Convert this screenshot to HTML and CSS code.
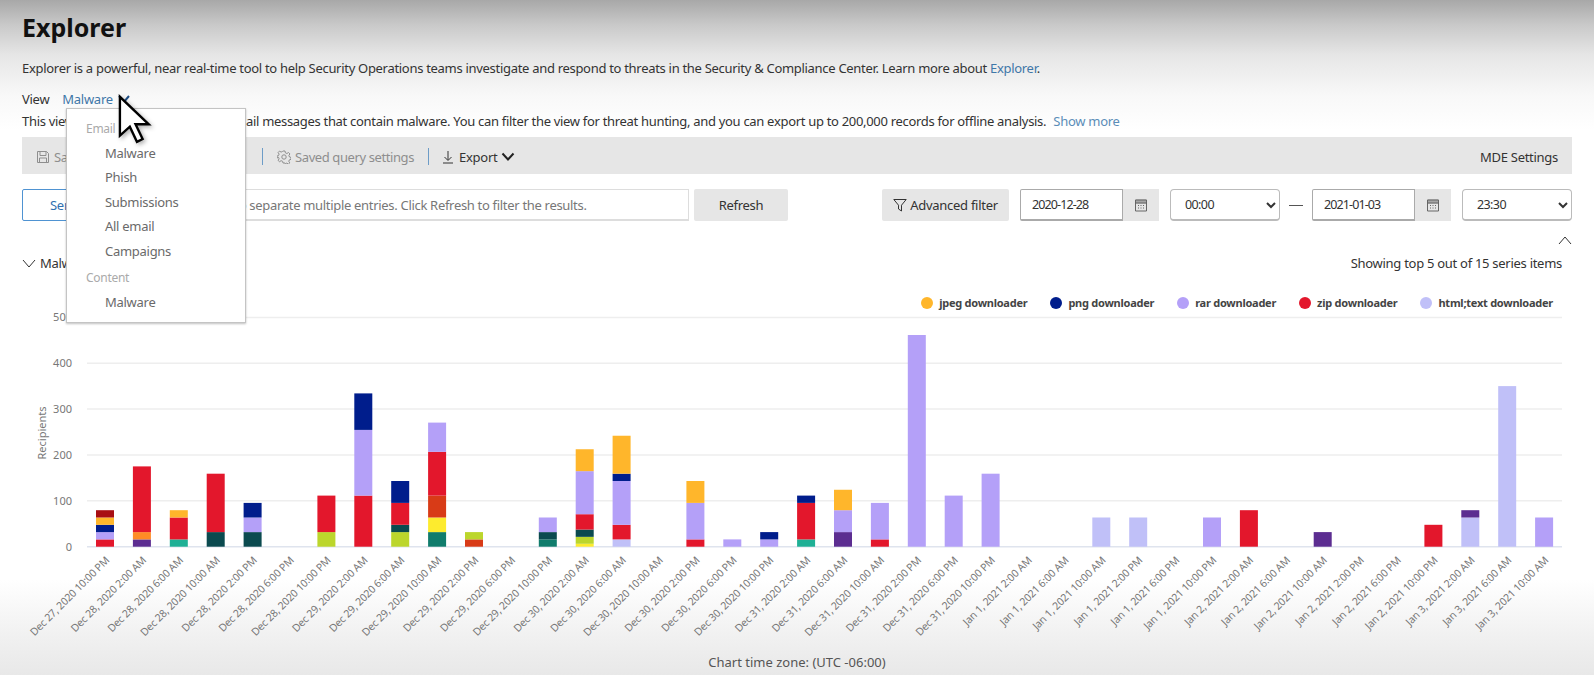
FILE: index.html
```html
<!DOCTYPE html>
<html lang="en">
<head>
    <meta charset="UTF-8">
    <meta name="viewport" content="width=device-width, initial-scale=1.0">
    <title>Explorer</title>
    <link rel="stylesheet" href="styles.css">
</head>
<body>
    <header class="intro">
        <h1>Explorer</h1>
        <p class="intro-text">Explorer is a powerful, near real-time tool to help Security Operations teams investigate and respond to threats in the Security &amp; Compliance Center. Learn more about <a href="#">Explorer</a>.</p>
        <div class="view-row">
            <span>View</span>
            <a href="#" class="view-link">Malware</a>
            <svg class="icon view-chevron" viewBox="0 0 14 14"><path d="M2 4l5 6 5-6" /></svg>
        </div>
        <p class="view-text">This view shows information about email messages that contain malware. You can filter the view for threat hunting, and you can export up to 200,000 records for offline analysis. <a href="#" class="show-more">Show more</a></p>
    </header>

    <div class="toolbar">
        <span class="tool tool-muted save-tool">
            <svg class="icon" viewBox="0 0 14 14"><path d="M1.5 1.5h9l2 2v9h-11zM4 1.5v4h6v-4M3.5 12.5v-4.5h7v4.5" /></svg>
            Save query
        </span>
        <span class="tool-sep"></span>
        <span class="tool tool-muted settings-tool">
            <svg class="icon" viewBox="0 0 14 14"><circle cx="7" cy="7" r="2.2" /><path d="M6 1h2l.4 1.8 1.5.7 1.6-1 1.4 1.4-1 1.6.6 1.5 1.5.4v2l-1.6.4-.6 1.5 1 1.6-1.4 1.2-1.6-1-1.5.6L8 13H6l-.4-1.7-1.5-.6-1.6 1-1.4-1.3 1-1.6-.6-1.5L0 8V6l1.5-.4.6-1.5-1-1.6 1.4-1.4 1.6 1 1.5-.7z" /></svg>
            Saved query settings
        </span>
        <span class="tool-sep"></span>
        <span class="tool export-tool">
            <svg class="icon" viewBox="0 0 14 14"><path d="M7 1v9M3.5 7L7 10.500 10.500 7M2 13h10" /></svg>
            Export
            <svg class="icon export-chevron" viewBox="0 0 14 14"><path d="M1.500 3.500L7 9.500l5.500-6" /></svg>
        </span>
        <span class="tool mde-tool">MDE Settings</span>
    </div>

    <div class="filters">
        <button type="button" class="sender-btn">Sender</button>
        <input type="text" class="search-input" placeholder="Use commas to separate multiple entries. Click Refresh to filter the results.">
        <button type="button" class="grey-btn refresh-btn">Refresh</button>
        <button type="button" class="grey-btn advanced-btn">
            <svg class="icon" viewBox="0 0 14 14"><path d="M.8 1.500h12.400L8.500 7.200v5.800l-3-2V7.200z" /></svg>
            Advanced filter
        </button>
        <div class="date-field">
            <input type="text" value="2020-12-28">
            <span class="cal-btn">
                <svg class="icon" viewBox="0 0 14 14"><path d="M1.500 2h11v11h-11zM1.500 5h11M4 7.500h1M6.500 7.500h1M9 7.500h1M4 10h1M6.500 10h1M9 10h1" /><path class="cal-head" d="M1.500 2h11v3h-11z" /></svg>
            </span>
        </div>
        <select class="time-select"><option>00:00</option></select>
        <span class="date-dash"></span>
        <div class="date-field">
            <input type="text" value="2021-01-03">
            <span class="cal-btn">
                <svg class="icon" viewBox="0 0 14 14"><path d="M1.500 2h11v11h-11zM1.500 5h11M4 7.500h1M6.500 7.500h1M9 7.500h1M4 10h1M6.500 10h1M9 10h1" /><path class="cal-head" d="M1.500 2h11v3h-11z" /></svg>
            </span>
        </div>
        <select class="time-select"><option>23:30</option></select>
    </div>

    <div class="collapse-row">
        <svg class="icon" viewBox="0 0 14 14"><path d="M1 10l6-7 6 7" /></svg>
    </div>
    <div class="chart-head">
        <span class="chart-title">
            <svg class="icon" viewBox="0 0 14 14"><path d="M1 4l6 7 6-7" /></svg>
            Malware family
        </span>
        <span>Showing top 5 out of 15 series items</span>
    </div>
    <div class="legend">
        <span class="legend-item"><i class="dot dot-amber"></i>jpeg downloader</span>
        <span class="legend-item"><i class="dot dot-navy"></i>png downloader</span>
        <span class="legend-item"><i class="dot dot-lilac"></i>rar downloader</span>
        <span class="legend-item"><i class="dot dot-red"></i>zip downloader</span>
        <span class="legend-item"><i class="dot dot-pale"></i>html;text downloader</span>
    </div>

    <svg id="chart" class="chart" viewBox="0 311 1594 340"></svg>
    <div class="time-zone">Chart time zone: (UTC -06:00)</div>

    <!-- view dropdown, open -->
    <div class="view-menu">
        <div class="menu-label">Email</div>
        <div class="menu-item">Malware</div>
        <div class="menu-item">Phish</div>
        <div class="menu-item">Submissions</div>
        <div class="menu-item">All email</div>
        <div class="menu-item">Campaigns</div>
        <div class="menu-label menu-label-gap">Content</div>
        <div class="menu-item">Malware</div>
    </div>

    <svg class="cursor" viewBox="0 0 40 56"><path d="M3 3v41l10.500-9.500 7.500 16 6-3-7.500-15.500h14z" /></svg>

    <script src="chart.js"></script>
</body>
</html>
```

FILE: styles.css
```css
html, body {
    margin: 0;
    height: 675px;
    overflow: hidden;
}
body {
    position: relative;
    font-family: "Noto Sans", sans-serif;
    font-size: 13px;
    letter-spacing: -0.28px;
    color: #333;
    background-color: #fff;
    background-image:
        linear-gradient(180deg, #a8a8a8 0, #c9c9c9 25px, #e6e6e6 55px, #f8f8f8 95px, #fff 130px),
        linear-gradient(0deg, #e8e8e8 0, #f1f1f1 40px, #fff 95px);
    background-repeat: no-repeat;
    background-size: 100% 130px, 100% 95px;
    background-position: top, bottom;
}
a {
    color: #3f77a8;
    text-decoration: none;
}
button, input, select {
    font: inherit;
    letter-spacing: inherit;
}
.icon {
    width: 14px;
    height: 14px;
    fill: none;
    stroke: currentColor;
    stroke-width: 1;
    flex: none;
}

/* heading block */
.intro {
    padding: 10px 22px 0;
}
h1 {
    margin: 0;
    font-size: 25px;
    line-height: 34px;
    font-weight: 700;
    letter-spacing: 0;
    color: #111;
}
.intro-text {
    margin: 14px 0 0;
    line-height: 20px;
    letter-spacing: -0.3px;
}
.view-row {
    display: flex;
    align-items: center;
    margin-top: 11px;
    height: 20px;
}
.view-link {
    margin-left: 13px;
}
.view-chevron {
    margin-left: 4px;
    color: #1f4f86;
    stroke-width: 2;
}
.view-text {
    margin: 2px 0 0;
    line-height: 20px;
    letter-spacing: -0.31px;
}
.show-more {
    margin-left: 4px;
    color: #5b8db8;
    letter-spacing: -0.28px;
}

/* toolbar */
.toolbar {
    box-sizing: border-box;
    display: flex;
    align-items: center;
    margin: 6px 22px 0;
    height: 37px;
    padding: 2px 14px 0;
    background: #e6e6e6;
}
.tool {
    display: flex;
    align-items: center;
    gap: 4px;
}
.tool-muted {
    color: #8e8e8e;
}
.save-tool {
    width: 212px;
}
.settings-tool {
    letter-spacing: -0.4px;
}
.tool-sep {
    width: 1px;
    height: 17px;
    margin: 0 14px;
    background: #6d9cc7;
}
.export-tool {
    margin-left: -2px;
}
.export-chevron {
    stroke-width: 2;
    color: #222;
}
.mde-tool {
    margin-left: auto;
}

/* filter row */
.filters {
    display: flex;
    align-items: center;
    margin: 15px 22px 0;
    height: 32px;
}
.sender-btn {
    width: 115px;
    height: 32px;
    color: #2f6fb0;
    text-align: left;
    padding-left: 27px;
    background: #fff;
    border: 1px solid #4f93d2;
    border-radius: 2px 0 0 2px;
}
.search-input {
    box-sizing: border-box;
    width: 552px;
    height: 32px;
    padding: 1px 0 0 18px;
    letter-spacing: -0.31px;
    border: 1px solid #ddd;
    border-bottom-width: 2px;
}
.search-input::placeholder {
    color: #777;
}
.grey-btn {
    display: flex;
    align-items: center;
    justify-content: center;
    height: 32px;
    color: #333;
    background: #e6e6e6;
    border: none;
    border-radius: 2px;
}
.refresh-btn {
    width: 94px;
    margin-left: 5px;
}
.advanced-btn {
    width: 127px;
    margin-left: 94px;
    gap: 3px;
}
.date-field {
    display: flex;
    height: 32px;
    width: 139px;
    margin-left: 11px;
}
.date-field + .time-select {
    margin-left: 11px;
}
.date-field input {
    box-sizing: border-box;
    width: 103px;
    height: 32px;
    padding: 0 0 0 11px;
    font-size: 12.500px;
    letter-spacing: -0.9px;
    color: #333;
    border: 1px solid #aaa;
    border-bottom-width: 2px;
    border-radius: 2px 0 0 2px;
}
.cal-btn {
    display: flex;
    align-items: center;
    justify-content: center;
    flex: 1;
    color: #666;
    background: #e6e6e6;
}
.cal-head {
    fill: currentColor;
    opacity: .5;
}
.time-select {
    box-sizing: border-box;
    width: 110px;
    height: 32px;
    padding-left: 10px;
    font-size: 12.500px;
    letter-spacing: -0.6px;
    color: #333;
    background: #fff;
    border: 1px solid #bbb;
    border-bottom-width: 2px;
    border-radius: 4px;
}
.date-dash {
    width: 14px;
    height: 1px;
    margin: 0 -2px 0 9px;
    background: #555;
}

/* chart header */
.collapse-row {
    display: flex;
    justify-content: flex-end;
    margin-top: 13px;
    height: 14px;
    padding-right: 22px;
    color: #333;
}
.chart-head {
    display: flex;
    justify-content: space-between;
    align-items: center;
    margin-top: 5px;
    height: 20px;
    padding: 0 32px 0 22px;
}
.chart-title {
    display: flex;
    align-items: center;
    gap: 4px;
}
.legend {
    display: flex;
    justify-content: flex-end;
    gap: 23px;
    margin-top: 21px;
    height: 17px;
    padding-right: 41px;
    font-size: 11px;
    letter-spacing: -0.25px;
    font-weight: 700;
    color: #444;
}
.legend-item {
    display: flex;
    align-items: center;
    gap: 6px;
}
.dot {
    width: 12px;
    height: 12px;
    border-radius: 50%;
}
.dot-amber { background: #ffb62b; }
.dot-navy { background: #001d8c; }
.dot-lilac { background: #b4a0f8; }
.dot-red { background: #e3172c; }
.dot-pale { background: #c0c0f8; }

/* chart */
.chart {
    display: block;
    width: 1594px;
    height: 340px;
    overflow: visible;
    font-family: "Noto Sans", sans-serif;
}
.grid-line {
    stroke: #eee;
    stroke-width: 1.500;
}
.base-line {
    stroke: #dfe4ee;
    stroke-width: 1.500;
}
.axis-text {
    font-size: 11px;
    letter-spacing: 0;
    fill: #777;
}
.time-label {
    font-size: 10.500px;
    letter-spacing: -0.2px;
    fill: #777;
}
.time-zone {
    margin-top: 1px;
    line-height: 20px;
    text-align: center;
    letter-spacing: 0;
    color: #555;
}

/* things lying on top */
.view-menu {
    position: absolute;
    left: 66px;
    top: 108px;
    box-sizing: border-box;
    width: 180px;
    height: 215px;
    padding: 8px 0 0 19px;
    background: #fff;
    border: 1px solid #c4c4c4;
    box-shadow: 0 1px 2px rgba(0, 0, 0, .25);
}
.menu-label {
    height: 24px;
    line-height: 24px;
    font-size: 12px;
    color: #aaa;
}
.menu-label-gap {
    margin-top: 3px;
}
.menu-item {
    height: 24.400px;
    line-height: 24.400px;
    margin-left: 19px;
    color: #6a6a6a;
}
.cursor {
    position: absolute;
    left: 117px;
    top: 94px;
    width: 38px;
    height: 53px;
    fill: #fff;
    stroke: #000;
    stroke-width: 2.500;
    stroke-linejoin: miter;
    filter: drop-shadow(2px 2px 2px rgba(0, 0, 0, .3));
}
```

FILE: chart.js
```js
const NS = 'http://www.w3.org/2000/svg';
const chart = document.getElementById('chart');

const BASE_Y = 546.7;
const UNIT = 7.3; // height of one step, about 15.6 recipients
const FIRST_X = 105;
const STEP_X = 36.9;
const BAR_W = 18;

const c = {
    red: '#e3172c', lilac: '#b4a0f8', navy: '#001d8c', amber: '#ffb62b',
    maroon: '#a80e13', purple: '#5c2d91', orange: '#ff8c26', mint: '#1fb095',
    deep: '#0b4a4f', lime: '#bcd62c', teal: '#107c6c', yellow: '#fdeb2e',
    rust: '#d83b17', pale: '#c0c0f8'
};

const labels = [
    'Dec 27, 2020 10:00 PM',
    'Dec 28, 2020 2:00 AM', 'Dec 28, 2020 6:00 AM', 'Dec 28, 2020 10:00 AM', 'Dec 28, 2020 2:00 PM', 'Dec 28, 2020 6:00 PM', 'Dec 28, 2020 10:00 PM',
    'Dec 29, 2020 2:00 AM', 'Dec 29, 2020 6:00 AM', 'Dec 29, 2020 10:00 AM', 'Dec 29, 2020 2:00 PM', 'Dec 29, 2020 6:00 PM', 'Dec 29, 2020 10:00 PM',
    'Dec 30, 2020 2:00 AM', 'Dec 30, 2020 6:00 AM', 'Dec 30, 2020 10:00 AM', 'Dec 30, 2020 2:00 PM', 'Dec 30, 2020 6:00 PM', 'Dec 30, 2020 10:00 PM',
    'Dec 31, 2020 2:00 AM', 'Dec 31, 2020 6:00 AM', 'Dec 31, 2020 10:00 AM', 'Dec 31, 2020 2:00 PM', 'Dec 31, 2020 6:00 PM', 'Dec 31, 2020 10:00 PM',
    'Jan 1, 2021 2:00 AM', 'Jan 1, 2021 6:00 AM', 'Jan 1, 2021 10:00 AM', 'Jan 1, 2021 2:00 PM', 'Jan 1, 2021 6:00 PM', 'Jan 1, 2021 10:00 PM',
    'Jan 2, 2021 2:00 AM', 'Jan 2, 2021 6:00 AM', 'Jan 2, 2021 10:00 AM', 'Jan 2, 2021 2:00 PM', 'Jan 2, 2021 6:00 PM', 'Jan 2, 2021 10:00 PM',
    'Jan 3, 2021 2:00 AM', 'Jan 3, 2021 6:00 AM', 'Jan 3, 2021 10:00 AM'
];

// stacks run bottom to top: [colour, steps]
const bars = {
    0: [[c.red, 1], [c.lilac, 1], [c.navy, 1], [c.amber, 1], [c.maroon, 1]],
    1: [[c.purple, 1], [c.orange, 1], [c.red, 9]],
    2: [[c.mint, 1], [c.red, 3], [c.amber, 1]],
    3: [[c.deep, 2], [c.red, 8]],
    4: [[c.deep, 2], [c.lilac, 2], [c.navy, 2]],
    6: [[c.lime, 2], [c.red, 5]],
    7: [[c.red, 7], [c.lilac, 9], [c.navy, 5]],
    8: [[c.lime, 2], [c.deep, 1], [c.red, 3], [c.navy, 3]],
    9: [[c.teal, 2], [c.yellow, 2], [c.rust, 3], [c.red, 6], [c.lilac, 4]],
    10: [[c.rust, 1], [c.lime, 1]],
    12: [[c.teal, 1], [c.deep, 1], [c.lilac, 2]],
    13: [[c.yellow, 0.4], [c.lime, 0.95], [c.deep, 1], [c.red, 2.1], [c.lilac, 5.9], [c.amber, 3]],
    14: [[c.pale, 1], [c.red, 2], [c.lilac, 6], [c.navy, 1], [c.amber, 5.2]],
    16: [[c.red, 1], [c.lilac, 5], [c.amber, 3]],
    17: [[c.lilac, 1]],
    18: [[c.lilac, 1], [c.navy, 1]],
    19: [[c.mint, 1], [c.red, 5], [c.navy, 1]],
    20: [[c.purple, 2], [c.lilac, 3], [c.amber, 2.8]],
    21: [[c.red, 1], [c.lilac, 5]],
    22: [[c.lilac, 29]],
    23: [[c.lilac, 7]],
    24: [[c.lilac, 10]],
    27: [[c.pale, 4]],
    28: [[c.pale, 4]],
    30: [[c.lilac, 4]],
    31: [[c.red, 5]],
    33: [[c.purple, 2]],
    36: [[c.red, 3]],
    37: [[c.pale, 4], [c.purple, 1]],
    38: [[c.pale, 22]],
    39: [[c.lilac, 4]]
};

function add(tag, attrs, text) {
    const el = document.createElementNS(NS, tag);
    for (const key in attrs) el.setAttribute(key, attrs[key]);
    if (text) el.textContent = text;
    chart.appendChild(el);
}

// grid and y axis
[0, 100, 200, 300, 400, 500].forEach(function (value) {
    const y = BASE_Y - value * 0.4586;
    add('line', { x1: 87, x2: 1562, y1: y, y2: y, class: value === 0 ? 'base-line' : 'grid-line' });
    add('text', { x: 72, y: y + 4, 'text-anchor': 'end', class: 'axis-text' }, String(value));
});
add('text', { x: 46, y: 433, 'text-anchor': 'middle', transform: 'rotate(-90 46 433)', class: 'axis-text' }, 'Recipients');

// bars and time labels
labels.forEach(function (label, i) {
    const cx = FIRST_X + i * STEP_X;
    let y = BASE_Y;
    (bars[i] || []).forEach(function (seg) {
        const h = seg[1] * UNIT;
        y -= h;
        add('rect', { x: cx - BAR_W / 2, y: y, width: BAR_W, height: h, fill: seg[0] });
    });
    const lx = cx + 5;
    const ly = 561;
    add('text', { x: lx, y: ly, 'text-anchor': 'end', transform: 'rotate(-45 ' + lx + ' ' + ly + ')', class: 'time-label' }, label);
});
```
